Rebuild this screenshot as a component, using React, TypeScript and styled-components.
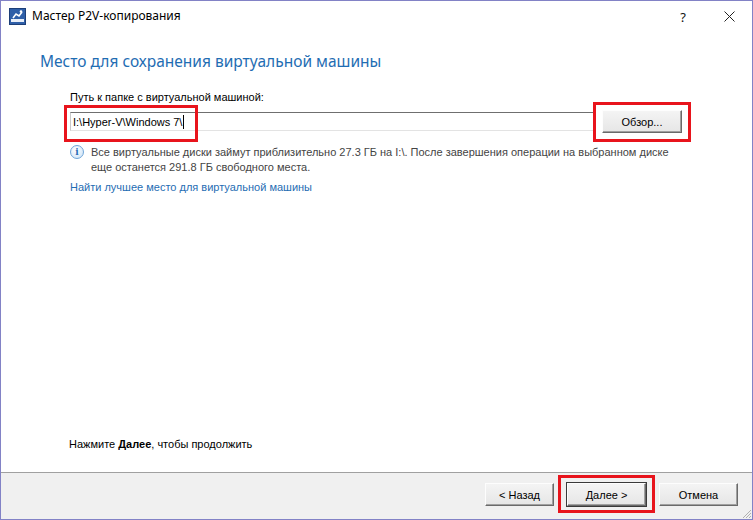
import React from "react";
import styled, { createGlobalStyle } from "styled-components";

const Global = createGlobalStyle`
  html, body { margin: 0; padding: 0; background: #fff; }
  body { width: 753px; height: 520px; overflow: hidden; }
  * { box-sizing: border-box; }
`;

const Window = styled.div`
  width: 753px;
  height: 520px;
  border: 1px solid #8282c6;
  display: flex;
  flex-direction: column;
  background: #fff;
  position: relative;
`;

const TitleBar = styled.div`
  height: 31px;
  display: flex;
  align-items: center;
  padding-left: 8px;
  font-family: "Noto Sans", "Open Sans", sans-serif;
  font-size: 12px;
  color: #000;
`;

const TitleText = styled.span`
  margin-left: 6px;
  flex: 1;
  position: relative;
  top: -1px;
`;

const TitleButton = styled.span<{ $w: number }>`
  width: ${(p) => p.$w}px;
  height: 31px;
  display: flex;
  align-items: center;
  justify-content: center;
  font-size: 13px;
  color: #111;
`;

const Content = styled.div`
  flex: 1;
  display: flex;
  flex-direction: column;
  padding: 18px 0 0 39px;
`;

const Heading = styled.h1`
  margin: 0;
  font-family: "Noto Sans", "Open Sans", sans-serif;
  font-weight: 400;
  font-size: 15.5px;
  color: #1f6db3;
  line-height: 22px;
`;

const Body = styled.div`
  padding-left: 30px;
  padding-right: 62px;
  font-family: "Liberation Sans", Arial, sans-serif;
  font-size: 11px;
  color: #000;
  display: flex;
  flex-direction: column;
  flex: 1;
`;

const Label = styled.div`
  margin-top: 18px;
  line-height: 14px;
`;

const PathRow = styled.div`
  margin-top: 6px;
  display: flex;
  align-items: center;
  gap: 9px;
  position: relative;
`;

const PathInput = styled.div`
  flex: 0 0 523px;
  height: 19px;
  border-top: 1px solid #6f6f6f;
  border-left: 1px solid #c9c9c9;
  border-bottom: 1px solid #e3e3e3;
  display: flex;
  align-items: center;
  padding-left: 2px;
  font-size: 11px;
`;

const Caret = styled.span`
  display: inline-block;
  width: 1px;
  height: 14px;
  background: #000;
  margin-left: 1px;
`;

const Button = styled.button<{ $w: number; $default?: boolean }>`
  width: ${(p) => p.$w}px;
  height: 23px;
  padding: 0;
  font-family: "Liberation Sans", Arial, sans-serif;
  font-size: 11px;
  color: #000;
  background: linear-gradient(#f4f4f4, #e6e6e6);
  border: 1px solid;
  border-color: #fdfdfd #6a6a6a #6a6a6a #fdfdfd;
  box-shadow: ${(p) =>
    p.$default
      ? "0 0 0 1px #3a3a3a, inset -1px -1px 0 #a0a0a0"
      : "inset -1px -1px 0 #a0a0a0"};
  outline: none;
`;

const RedBox = styled.span<{ $l: number; $t: number; $w: number; $h: number }>`
  position: absolute;
  left: ${(p) => p.$l}px;
  top: ${(p) => p.$t}px;
  width: ${(p) => p.$w}px;
  height: ${(p) => p.$h}px;
  border: 3px solid #e8141c;
  pointer-events: none;
`;

const InfoRow = styled.div`
  margin-top: 12px;
  display: flex;
  align-items: flex-start;
  gap: 7px;
  line-height: 15px;
  color: #444;
`;

const InfoIcon = styled.span`
  flex: 0 0 14px;
  height: 14px;
  border-radius: 50%;
  border: 1px solid #6fa5d8;
  background: radial-gradient(circle at 40% 35%, #ffffff, #c8e0f6);
  display: flex;
  align-items: center;
  justify-content: center;
  font-family: "DejaVu Serif", serif;
  font-weight: 700;
  font-size: 9px;
  color: #2a6cb6;
`;

const Link = styled.a`
  margin-top: 5px;
  color: #1f6db3;
  text-decoration: none;
  line-height: 14px;
`;

const Hint = styled.div`
  margin-top: auto;
  margin-bottom: 21px;
  margin-left: -1px;
  line-height: 14px;
`;

const Footer = styled.div`
  height: 47px;
  border-top: 1px solid #a0a0a0;
  background: #f0f0f0;
  display: flex;
  justify-content: flex-end;
  align-items: flex-start;
  padding: 10px 14px 0 0;
  position: relative;
`;

const FooterGap = styled.span<{ $w: number }>`
  width: ${(p) => p.$w}px;
`;

const Grip = styled.svg`
  position: absolute;
  right: 0;
  bottom: 0;
`;

const AppIcon = () => (
  <svg width="17" height="17" viewBox="0 0 17 17">
    <rect x="0.5" y="0.5" width="16" height="16" fill="#2f5fa8" stroke="#1d3f78" />
    <rect x="2" y="11" width="13" height="3" fill="#e8eef8" />
    <path d="M4 10 L7 6 L10 8 L13 4" stroke="#fff" strokeWidth="1.6" fill="none" />
    <circle cx="12" cy="3.5" r="1.3" fill="#fff" />
  </svg>
);

export default function App() {
  return (
    <>
      <Global />
      <Window>
        <TitleBar>
          <AppIcon />
          <TitleText>Мастер P2V-копирования</TitleText>
          <TitleButton $w={46}>?</TitleButton>
          <TitleButton $w={46}>
            <svg width="11" height="11" viewBox="0 0 11 11">
              <path d="M0.5 0.5 L10.5 10.5 M10.5 0.5 L0.5 10.5" stroke="#222" strokeWidth="1" />
            </svg>
          </TitleButton>
        </TitleBar>
        <Content>
          <Heading>Место для сохранения виртуальной машины</Heading>
          <Body>
            <Label>Путь к папке с виртуальной машиной:</Label>
            <PathRow>
              <PathInput>
                I:\Hyper-V\Windows 7\<Caret />
              </PathInput>
              <Button $w={80}>Обзор...</Button>
              <RedBox $l={-6} $t={-5} $w={134} $h={37} />
              <RedBox $l={523} $t={-8} $w={98} $h={40} />
            </PathRow>
            <InfoRow>
              <InfoIcon>i</InfoIcon>
              <span>
                Все виртуальные диски займут приблизительно 27.3 ГБ на I:\. После завершения операции на выбранном диске
                <br />
                еще останется 291.8 ГБ свободного места.
              </span>
            </InfoRow>
            <Link href="#">Найти лучшее место для виртуальной машины</Link>
            <Hint>
              Нажмите <b>Далее</b>, чтобы продолжить
            </Hint>
          </Body>
        </Content>
        <Footer>
          <Button $w={69}>&lt; Назад</Button>
          <FooterGap $w={13} />
          <Button $w={79} $default>
            Далее &gt;
          </Button>
          <FooterGap $w={13} />
          <Button $w={79}>Отмена</Button>
          <RedBox $l={557} $t={2} $w={97} $h={38} />
          <Grip width="12" height="12" viewBox="0 0 12 12">
            <path d="M11 3 L3 11 M11 6 L6 11 M11 9 L9 11" stroke="#b0b0b0" strokeWidth="1" />
          </Grip>
        </Footer>
      </Window>
    </>
  );
}
